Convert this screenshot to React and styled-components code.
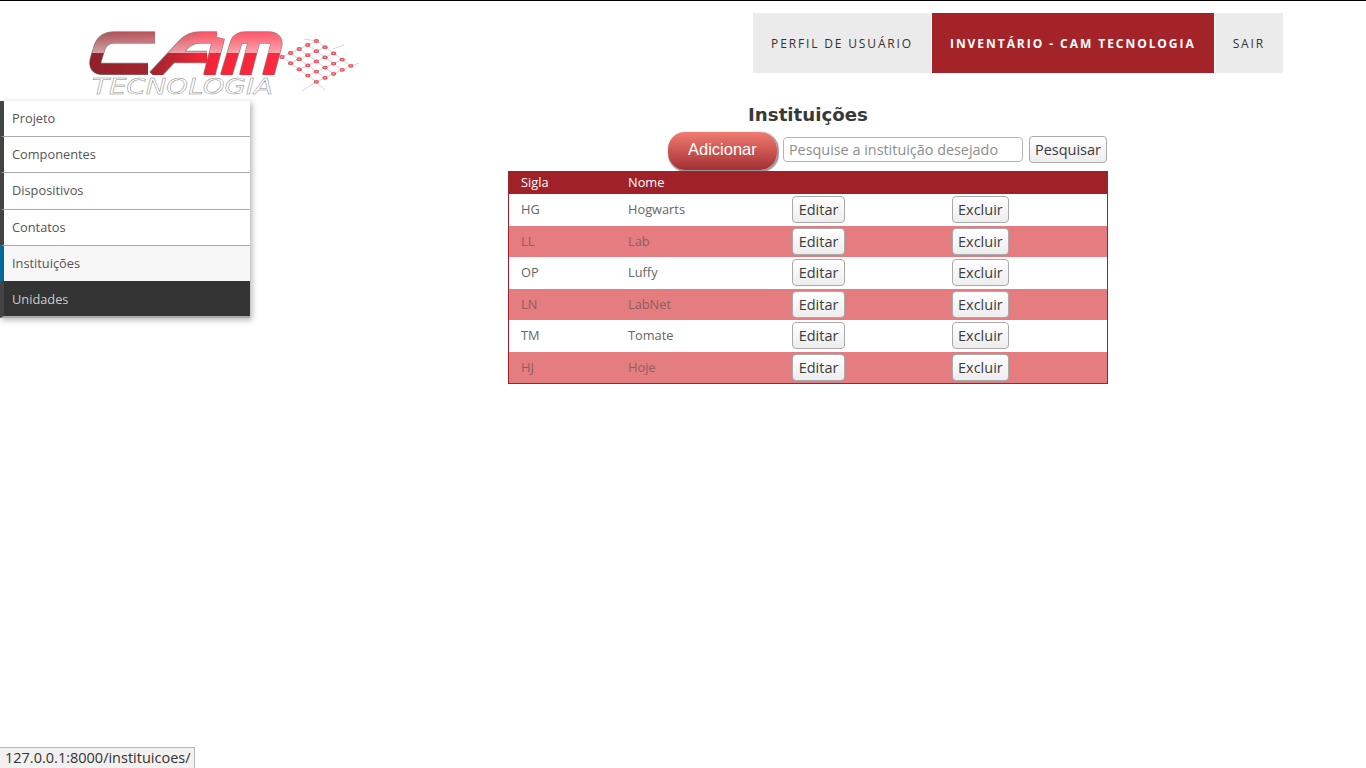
import React from 'react'
import styled, { createGlobalStyle } from 'styled-components'

const sideItems = ['Projeto', 'Componentes', 'Dispositivos', 'Contatos', 'Instituições', 'Unidades']

const rows = [
  ['HG', 'Hogwarts'],
  ['LL', 'Lab'],
  ['OP', 'Luffy'],
  ['LN', 'LabNet'],
  ['TM', 'Tomate'],
  ['HJ', 'Hoje'],
]

// mesh nodes of the logo, a skewed lattice that opens up to the right
const meshNodes = () => {
  const out = []
  for (let u = 0; u < 5; u++) {
    for (let v = 0; v < 5; v++) {
      out.push({
        u,
        v,
        x: 282 + u * 8.6 + v * 8.6,
        y: 57 + u * 6.2 - v * 4,
      })
    }
  }
  return out
}

const cPath = 'M155 37.5 L114 37.5 Q104 37.5 100 46 L96 59 Q93 69 103 69 L148 69'
const aPath = 'M154 76 L183 45 Q190 37.5 200 37.5 L217 37.5 M172 57 L207 57 M219 37.5 L209 76'
const mPath = 'M226 76 L236 43 Q238 37.5 246 37.5 L268 37.5 Q278 37.5 276 46 L268 76 M255 37.5 L245 76'

const Logo = () => {
  const nodes = meshNodes()
  const at = (u, v) => nodes[u * 5 + v]
  const shapes = [cPath, aPath, mPath]
  return (
    <LogoSvg viewBox="85 28 280 70">
      <defs>
        <linearGradient id="camBase" gradientUnits="userSpaceOnUse" x1="90" y1="0" x2="280" y2="0">
          <stop offset="0" stopColor="#8f2229" />
          <stop offset="0.35" stopColor="#a8252f" />
          <stop offset="0.6" stopColor="#f42438" />
          <stop offset="1" stopColor="#fb2a40" />
        </linearGradient>
        <linearGradient id="camGloss" gradientUnits="userSpaceOnUse" x1="0" y1="32" x2="0" y2="53">
          <stop offset="0" stopColor="#fff" stopOpacity="0.22" />
          <stop offset="1" stopColor="#fff" stopOpacity="0.58" />
        </linearGradient>
        <radialGradient id="meshDot">
          <stop offset="0" stopColor="#f9a0a8" />
          <stop offset="1" stopColor="#e8303f" />
        </radialGradient>
        <clipPath id="glossClip">
          <rect x="85" y="28" width="200" height="25" />
        </clipPath>
        <clipPath id="baseClip">
          <rect x="85" y="28" width="200" height="47" />
        </clipPath>
      </defs>

      <g stroke="#a8a8a8" strokeWidth="0.5" fill="none">
        {nodes.map(n => (
          <g key={`${n.u}-${n.v}`}>
            {n.u < 4 && <line x1={n.x} y1={n.y} x2={at(n.u + 1, n.v).x} y2={at(n.u + 1, n.v).y} />}
            {n.v < 4 && <line x1={n.x} y1={n.y} x2={at(n.u, n.v + 1).x} y2={at(n.u, n.v + 1).y} />}
          </g>
        ))}
        <line x1="316" y1="82" x2="302" y2="91" />
        <line x1="316" y1="82" x2="325" y2="90" />
        <line x1="351" y1="66" x2="359" y2="63" />
        <line x1="316" y1="41" x2="304" y2="39" />
        <line x1="333" y1="49" x2="344" y2="45" />
      </g>
      {nodes.map(n => (
        <ellipse key={`${n.u}:${n.v}`} cx={n.x} cy={n.y} rx="2.6" ry="1.9" fill="url(#meshDot)" />
      ))}

      <g fill="none" strokeLinejoin="round" clipPath="url(#baseClip)">
        {shapes.map(d => <path key={d} d={d} stroke="#8d8d8d" strokeWidth="12.4" />)}
        {shapes.map(d => <path key={d} d={d} stroke="url(#camBase)" strokeWidth="11" />)}
      </g>
      <g fill="none" strokeLinejoin="round" clipPath="url(#glossClip)">
        {shapes.map(d => <path key={d} d={d} stroke="url(#camGloss)" strokeWidth="11" />)}
      </g>

      <LogoWord x="92" y="94" textLength="181" lengthAdjust="spacingAndGlyphs">TECNOLOGIA</LogoWord>
    </LogoSvg>
  )
}

const App = () => {
  return (
    <>
      <GlobalStyle />
      <Header>
        <Logo />
        <Nav>
          <NavItem>Perfil de usuário</NavItem>
          <NavItem active>Inventário - CAM Tecnologia</NavItem>
          <NavItem>Sair</NavItem>
        </Nav>
      </Header>

      <Body>
        <Sidebar>
          {sideItems.map(item => (
            <SideItem
              key={item}
              current={item === 'Instituições'}
              hovered={item === 'Unidades'}
            >
              {item}
            </SideItem>
          ))}
        </Sidebar>

        <Content>
          <Title>Instituições</Title>
          <Toolbar>
            <AddButton>Adicionar</AddButton>
            <SearchInput placeholder="Pesquise a instituição desejado" />
            <Button>Pesquisar</Button>
          </Toolbar>
          <Table>
            <thead>
              <tr>
                <HeadCell>Sigla</HeadCell>
                <HeadCell>Nome</HeadCell>
                <HeadCell />
                <HeadCell />
              </tr>
            </thead>
            <tbody>
              {rows.map(([sigla, nome], i) => (
                <Row key={sigla} striped={i % 2 === 1}>
                  <Cell>{sigla}</Cell>
                  <Cell>{nome}</Cell>
                  <ActionCell><Button>Editar</Button></ActionCell>
                  <ActionCell><Button>Excluir</Button></ActionCell>
                </Row>
              ))}
            </tbody>
          </Table>
        </Content>
      </Body>

      <StatusBubble>127.0.0.1:8000/instituicoes/</StatusBubble>
    </>
  )
}

const GlobalStyle = createGlobalStyle`
  html, body {
    margin: 0;
    padding: 0;
    background: #fff;
    font-family: "Open Sans", "Noto Sans", sans-serif;
  }
`

const Header = styled.header`
  height: 100px;
  border-top: 1px solid #000;
  display: flex;
  justify-content: space-between;
  align-items: flex-start;
  padding: 0 83px 0 85px;
`

const LogoSvg = styled.svg`
  width: 280px;
  height: 70px;
  margin-top: 27px;
  flex: none;
`

const LogoWord = styled.text`
  font-family: "DejaVu Sans", sans-serif;
  font-style: italic;
  font-size: 22px;
  fill: #fff;
  stroke: #8a8a8a;
  stroke-width: 0.45;
`

const Nav = styled.nav`
  display: flex;
  gap: 1px;
  margin-top: 12px;
`

const NavItem = styled.a`
  height: 60px;
  display: flex;
  align-items: center;
  padding: 0 18px;
  font-size: 12px;
  letter-spacing: ${props => (props.active ? '1.95px' : '1.85px')};
  text-transform: uppercase;
  white-space: nowrap;
  font-weight: ${props => (props.active ? 700 : 400)};
  color: ${props => (props.active ? '#fff' : '#333')};
  background: ${props => (props.active ? '#a32329' : '#ebebeb')};
`

const Body = styled.div`
  display: flex;
  align-items: flex-start;
`

const Sidebar = styled.aside`
  width: 250px;
  flex: none;
  box-shadow: 2px 2px 6px rgba(0, 0, 0, 0.3);
`

const SideItem = styled.div`
  height: 36.2px;
  box-sizing: border-box;
  display: flex;
  align-items: center;
  padding: 0 0 1px 8px;
  font-size: 12.8px;
  border-left: 4px solid ${props => (props.current ? '#00699c' : '#444')};
  border-bottom: ${props => (props.hovered ? 2 : 1)}px solid ${props => (props.current ? '#333' : '#aaa')};
  color: ${props => (props.hovered ? '#ccc' : '#555')};
  background: ${props => (props.hovered ? '#333' : props.current ? '#f7f7f7' : '#fff')};
`

const Content = styled.main`
  width: 600px;
  margin-left: 258px;
  display: flex;
  flex-direction: column;
`

const Title = styled.h1`
  margin: 3px 0 0;
  height: 28px;
  line-height: 22px;
  text-align: center;
  font-family: "DejaVu Sans", sans-serif;
  font-size: 18.2px;
  font-weight: 700;
  color: #383838;
`

const Toolbar = styled.div`
  display: flex;
  align-items: center;
  justify-content: flex-end;
  gap: 6px;
  height: 35px;
  padding-right: 1px;
  margin-bottom: 4px;
`

const AddButton = styled.button`
  align-self: flex-start;
  width: 109px;
  height: 38px;
  padding: 0 0 4px;
  border: 0;
  border-radius: 17px;
  color: #fff;
  font-family: "Liberation Sans", sans-serif;
  font-size: 16.5px;
  background: linear-gradient(#f07c72, #a42f33);
  box-shadow: 1px 1px 1px 1px #999;
`

const SearchInput = styled.input`
  width: 240px;
  height: 25px;
  box-sizing: border-box;
  padding: 0 5px;
  border: 1px solid #b5b5b5;
  border-radius: 4px;
  font-family: inherit;
  font-size: 14.4px;
  color: #333;
  &::placeholder {
    color: #8e8e8e;
    opacity: 1;
  }
`

const Button = styled.button`
  min-width: 53px;
  height: 27px;
  padding: 0 5px;
  border: 1px solid #aaa;
  border-radius: 4px;
  background: linear-gradient(#fff, #ededed);
  font-family: inherit;
  font-size: 14.5px;
  color: #3c3c3c;
`

const Table = styled.table`
  width: 600px;
  table-layout: fixed;
  border-collapse: separate;
  border-spacing: 0;
  border: 1px solid #a02228;
  border-top: 0;
  box-sizing: border-box;
`

const HeadCell = styled.th`
  height: 23px;
  box-sizing: border-box;
  padding: 0 0 1px 12px;
  text-align: left;
  font-size: 12.8px;
  font-weight: 400;
  color: #fff;
  background: #a02228;
  &:nth-child(1) { width: 107px; }
  &:nth-child(2) { width: 176px; }
  &:nth-child(3) { width: 160px; }
`

const Row = styled.tr`
  background: ${props => (props.striped ? '#e57c7f' : '#fff')};
  color: ${props => (props.striped ? '#8a5f62' : '#666')};
`

const Cell = styled.td`
  height: 31.5px;
  box-sizing: border-box;
  padding: 0 0 1px 12px;
  font-size: 12.8px;
`

const ActionCell = styled.td`
  height: 31.5px;
  padding: 0;
`

const StatusBubble = styled.div`
  position: fixed;
  left: 0;
  bottom: 0;
  height: 20px;
  line-height: 20px;
  padding: 0 3px 0 5px;
  background: #f2f1f0;
  border-top: 1px solid #b8b8b8;
  border-right: 1px solid #b8b8b8;
  font-size: 14.5px;
  color: #333;
`

export default App
